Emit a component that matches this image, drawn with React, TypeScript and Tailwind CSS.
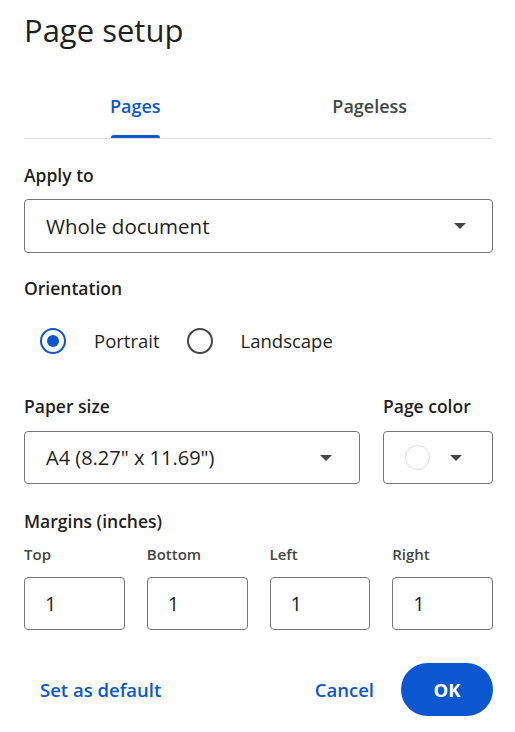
import React from "react";

const Caret = () => (
  <svg width="12" height="6" viewBox="0 0 12 6" className="shrink-0">
    <path d="M0 0 L12 0 L6 6 Z" fill="#444746" />
  </svg>
);

export default function App() {
  const font = { fontFamily: "'Open Sans', Roboto, sans-serif" } as React.CSSProperties;
  return (
    <div className="w-[515px] h-[732px] bg-white text-[#1f1f1f] pl-6 pr-[22px] pt-[10px]" style={font}>
      <h1 className="text-[31px] leading-[40px] font-normal">Page setup</h1>
      <div className="mt-[42px] flex border-b border-[#e0e0e0]">
        <div className="flex-1 flex flex-col items-center">
          <span className="text-[18px] leading-[28px] font-semibold text-[#0b57d0] pr-[12px]">Pages</span>
          <div className="mt-[15px] h-[3px] w-[49px] rounded-t-[3px] bg-[#0b57d0] mr-[12px]" />
        </div>
        <div className="flex-1 flex flex-col items-center">
          <span className="text-[18px] leading-[28px] font-semibold text-[#444746] pr-[12px]">Pageless</span>
          <div className="mt-[15px] h-[3px]" />
        </div>
      </div>

      <div className="mt-[24px] text-[17.5px] leading-[24px] font-semibold">Apply to</div>
      <div className="mt-[12px] h-[54px] border border-[#747775] rounded-[4px] flex items-center justify-between pl-[21px] pr-[26px]">
        <span className="text-[20.5px]">Whole document</span>
        <Caret />
      </div>

      <div className="mt-[23px] text-[17.5px] leading-[24px] font-semibold">Orientation</div>
      <div className="mt-[26px] flex items-center h-[30px] pl-[16px]">
        <div className="w-[26px] h-[26px] rounded-full border-2 border-[#0b57d0] flex items-center justify-center">
          <div className="w-[12px] h-[12px] rounded-full bg-[#0b57d0]" />
        </div>
        <span className="ml-[28px] text-[18.5px]">Portrait</span>
        <div className="ml-[27px] w-[26px] h-[26px] rounded-full border-2 border-[#444746]" />
        <span className="ml-[28px] text-[18.5px]">Landscape</span>
      </div>

      <div className="mt-[38px] flex gap-[23px]">
        <div className="flex-1">
          <div className="text-[17.5px] leading-[24px] font-semibold">Paper size</div>
          <div className="mt-[13px] h-[53px] border border-[#747775] rounded-[4px] flex items-center justify-between pl-[21px] pr-[27px]">
            <span className="text-[20px]">A4 (8.27" x 11.69")</span>
            <Caret />
          </div>
        </div>
        <div className="w-[110px]">
          <div className="text-[17.5px] leading-[24px] font-semibold">Page color</div>
          <div className="mt-[13px] h-[53px] border border-[#747775] rounded-[4px] flex items-center pl-[21px]">
            <div className="w-[25px] h-[25px] rounded-full border border-[#dadce0] bg-white" />
            <div className="ml-[20px]"><Caret /></div>
          </div>
        </div>
      </div>

      <div className="mt-[25px] text-[17.5px] leading-[24px] font-semibold">Margins (inches)</div>
      <div className="mt-[11px] grid grid-cols-4 gap-x-[22px]">
        {["Top", "Bottom", "Left", "Right"].map((l) => (
          <div key={l}>
            <div className="text-[15px] leading-[20px] font-semibold text-[#444746]">{l}</div>
            <div className="mt-[13px] h-[53px] border border-[#747775] rounded-[4px] flex items-center pl-[20px] text-[20px]">1</div>
          </div>
        ))}
      </div>

      <div className="mt-[33px] flex items-center">
        <span className="ml-[16px] text-[18.5px] font-semibold text-[#0b57d0]">Set as default</span>
        <span className="ml-auto text-[18.5px] font-semibold text-[#0b57d0]">Cancel</span>
        <div className="ml-[27px] w-[92px] h-[53px] rounded-full bg-[#0b57d0] text-white text-[18.5px] font-bold flex items-center justify-center">OK</div>
      </div>
    </div>
  );
}
